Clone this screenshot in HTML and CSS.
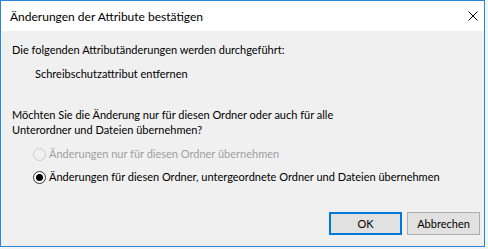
FILE: index.html
```html
<!DOCTYPE html>
<html lang="de">
<head>
    <meta charset="UTF-8">
    <title>Änderungen der Attribute bestätigen</title>
    <link rel="stylesheet" href="styles.css">
</head>
<body>
    <div class="window">
        <div class="titlebar">
            <span class="title">Änderungen der Attribute bestätigen</span>
            <span class="close">
                <svg width="10" height="10" viewBox="0 0 10 10">
                    <path d="M0.5 0.5 L9.5 9.5 M9.5 0.5 L0.5 9.5" stroke="#000" stroke-width="1" fill="none"/>
                </svg>
            </span>
        </div>
        <div class="content">
            <div class="line intro">Die folgenden Attributänderungen werden durchgeführt:</div>
            <div class="line change">Schreibschutzattribut entfernen</div>
            <div class="question">Möchten Sie die Änderung nur für diesen Ordner oder auch für alle<br>Unterordner und Dateien übernehmen?</div>
            <div class="options">
                <div class="option disabled">
                    <span class="radio"></span>
                    <span>Änderungen nur für diesen Ordner übernehmen</span>
                </div>
                <div class="option">
                    <span class="radio checked"></span>
                    <span>Änderungen für diesen Ordner, untergeordnete Ordner und Dateien übernehmen</span>
                </div>
            </div>
            <div class="buttons">
                <button class="btn default">OK</button>
                <button class="btn">Abbrechen</button>
            </div>
        </div>
    </div>
</body>
</html>
```

FILE: styles.css
```css
body {
    margin: 0;
    background-color: #f4f4f4;
    font-family: Lato, "Liberation Sans", sans-serif;
    font-size: 11px;
    color: #000000;
}
.window {
    width: 483px;
    height: 245px;
    border: 1px solid #2a86d6;
    background-color: #f0f0f0;
    display: flex;
    flex-direction: column;
}
.titlebar {
    height: 30px;
    flex-shrink: 0;
    background-color: #ffffff;
    display: flex;
    align-items: center;
    justify-content: space-between;
    padding-left: 9px;
    padding-right: 6px;
}
.title {
    font-size: 12px;
}
.close {
    width: 10px;
    height: 10px;
    display: flex;
}
.content {
    flex: 1;
    padding: 0 4px 0 11px;
    white-space: nowrap;
}
.line {
    line-height: 16px;
}
.intro {
    margin-top: 11px;
}
.change {
    margin-top: 8px;
    padding-left: 23px;
}
.question {
    margin-top: 25px;
    line-height: 15px;
}
.options {
    margin-top: 9px;
    padding-left: 21px;
    display: flex;
    flex-direction: column;
    gap: 7px;
}
.option {
    display: flex;
    align-items: center;
    gap: 3px;
    height: 16px;
    line-height: 16px;
}
.option.disabled {
    color: #a0a0a0;
}
.radio {
    width: 11px;
    height: 11px;
    border: 1px solid #333333;
    border-radius: 50%;
    background-color: #ffffff;
    display: flex;
    align-items: center;
    justify-content: center;
    flex-shrink: 0;
}
.option.disabled .radio {
    border-color: #cccccc;
    background-color: #f0f0f0;
}
.radio.checked::after {
    content: "";
    width: 7px;
    height: 7px;
    border-radius: 50%;
    background-color: #000000;
}
.buttons {
    margin-top: 27px;
    display: flex;
    justify-content: flex-end;
    gap: 5px;
}
.btn {
    width: 73px;
    height: 23px;
    font-family: inherit;
    font-size: 11px;
    background-color: #e1e1e1;
    border: 1px solid #adadad;
    padding: 0;
    margin: 0;
}
.btn.default {
    border: 2px solid #0078d7;
}
```
